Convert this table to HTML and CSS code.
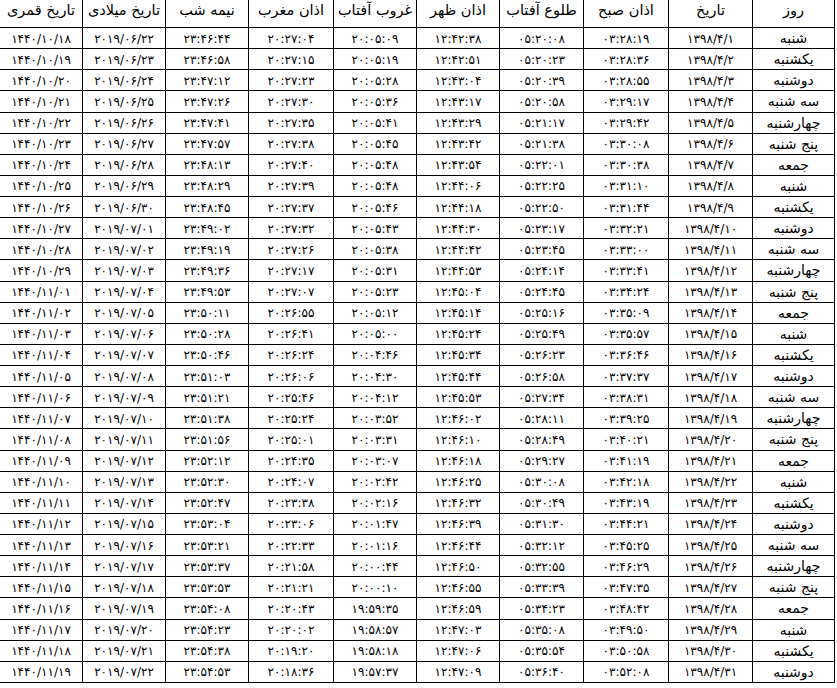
FILE: index.html
```html
<!DOCTYPE html>
<html lang="fa" dir="rtl">
<head>
<meta charset="utf-8">
<title>اوقات شرعی</title>
<link rel="stylesheet" href="styles.css">
</head>
<body>
<table class="times">
<colgroup>
<col class="c1"><col class="c2"><col class="c3"><col class="c4"><col class="c5"><col class="c6"><col class="c7"><col class="c8"><col class="c9"><col class="c10">
</colgroup>
<thead>
<tr class="head"><th>روز</th><th>تاریخ</th><th>اذان صبح</th><th>طلوع آفتاب</th><th>اذان ظهر</th><th>غروب آفتاب</th><th>اذان مغرب</th><th>نیمه شب</th><th>تاریخ میلادی</th><th>تاریخ قمری</th></tr>
</thead>
<tbody>
<tr><td>شنبه</td><td>۱۳۹۸/۴/۱</td><td>۰۳:۲۸:۱۹</td><td>۰۵:۲۰:۰۸</td><td>۱۲:۴۲:۳۸</td><td>۲۰:۰۵:۰۹</td><td>۲۰:۲۷:۰۴</td><td>۲۳:۴۶:۴۴</td><td>۲۰۱۹/۰۶/۲۲</td><td>۱۴۴۰/۱۰/۱۸</td></tr>
<tr><td>یکشنبه</td><td>۱۳۹۸/۴/۲</td><td>۰۳:۲۸:۳۶</td><td>۰۵:۲۰:۲۳</td><td>۱۲:۴۲:۵۱</td><td>۲۰:۰۵:۱۹</td><td>۲۰:۲۷:۱۵</td><td>۲۳:۴۶:۵۸</td><td>۲۰۱۹/۰۶/۲۳</td><td>۱۴۴۰/۱۰/۱۹</td></tr>
<tr><td>دوشنبه</td><td>۱۳۹۸/۴/۳</td><td>۰۳:۲۸:۵۵</td><td>۰۵:۲۰:۳۹</td><td>۱۲:۴۳:۰۴</td><td>۲۰:۰۵:۲۸</td><td>۲۰:۲۷:۲۳</td><td>۲۳:۴۷:۱۲</td><td>۲۰۱۹/۰۶/۲۴</td><td>۱۴۴۰/۱۰/۲۰</td></tr>
<tr><td>سه شنبه</td><td>۱۳۹۸/۴/۴</td><td>۰۳:۲۹:۱۷</td><td>۰۵:۲۰:۵۸</td><td>۱۲:۴۳:۱۷</td><td>۲۰:۰۵:۳۶</td><td>۲۰:۲۷:۳۰</td><td>۲۳:۴۷:۲۶</td><td>۲۰۱۹/۰۶/۲۵</td><td>۱۴۴۰/۱۰/۲۱</td></tr>
<tr><td>چهارشنبه</td><td>۱۳۹۸/۴/۵</td><td>۰۳:۲۹:۴۲</td><td>۰۵:۲۱:۱۷</td><td>۱۲:۴۳:۲۹</td><td>۲۰:۰۵:۴۱</td><td>۲۰:۲۷:۳۵</td><td>۲۳:۴۷:۴۱</td><td>۲۰۱۹/۰۶/۲۶</td><td>۱۴۴۰/۱۰/۲۲</td></tr>
<tr><td>پنج شنبه</td><td>۱۳۹۸/۴/۶</td><td>۰۳:۳۰:۰۸</td><td>۰۵:۲۱:۳۸</td><td>۱۲:۴۳:۴۲</td><td>۲۰:۰۵:۴۵</td><td>۲۰:۲۷:۳۸</td><td>۲۳:۴۷:۵۷</td><td>۲۰۱۹/۰۶/۲۷</td><td>۱۴۴۰/۱۰/۲۳</td></tr>
<tr><td>جمعه</td><td>۱۳۹۸/۴/۷</td><td>۰۳:۳۰:۳۸</td><td>۰۵:۲۲:۰۱</td><td>۱۲:۴۳:۵۴</td><td>۲۰:۰۵:۴۸</td><td>۲۰:۲۷:۴۰</td><td>۲۳:۴۸:۱۳</td><td>۲۰۱۹/۰۶/۲۸</td><td>۱۴۴۰/۱۰/۲۴</td></tr>
<tr><td>شنبه</td><td>۱۳۹۸/۴/۸</td><td>۰۳:۳۱:۱۰</td><td>۰۵:۲۲:۲۵</td><td>۱۲:۴۴:۰۶</td><td>۲۰:۰۵:۴۸</td><td>۲۰:۲۷:۳۹</td><td>۲۳:۴۸:۲۹</td><td>۲۰۱۹/۰۶/۲۹</td><td>۱۴۴۰/۱۰/۲۵</td></tr>
<tr><td>یکشنبه</td><td>۱۳۹۸/۴/۹</td><td>۰۳:۳۱:۴۴</td><td>۰۵:۲۲:۵۰</td><td>۱۲:۴۴:۱۸</td><td>۲۰:۰۵:۴۶</td><td>۲۰:۲۷:۳۷</td><td>۲۳:۴۸:۴۵</td><td>۲۰۱۹/۰۶/۳۰</td><td>۱۴۴۰/۱۰/۲۶</td></tr>
<tr><td>دوشنبه</td><td>۱۳۹۸/۴/۱۰</td><td>۰۳:۳۲:۲۱</td><td>۰۵:۲۳:۱۷</td><td>۱۲:۴۴:۳۰</td><td>۲۰:۰۵:۴۳</td><td>۲۰:۲۷:۳۲</td><td>۲۳:۴۹:۰۲</td><td>۲۰۱۹/۰۷/۰۱</td><td>۱۴۴۰/۱۰/۲۷</td></tr>
<tr><td>سه شنبه</td><td>۱۳۹۸/۴/۱۱</td><td>۰۳:۳۳:۰۰</td><td>۰۵:۲۳:۴۵</td><td>۱۲:۴۴:۴۲</td><td>۲۰:۰۵:۳۸</td><td>۲۰:۲۷:۲۶</td><td>۲۳:۴۹:۱۹</td><td>۲۰۱۹/۰۷/۰۲</td><td>۱۴۴۰/۱۰/۲۸</td></tr>
<tr><td>چهارشنبه</td><td>۱۳۹۸/۴/۱۲</td><td>۰۳:۳۳:۴۱</td><td>۰۵:۲۴:۱۴</td><td>۱۲:۴۴:۵۳</td><td>۲۰:۰۵:۳۱</td><td>۲۰:۲۷:۱۷</td><td>۲۳:۴۹:۳۶</td><td>۲۰۱۹/۰۷/۰۳</td><td>۱۴۴۰/۱۰/۲۹</td></tr>
<tr><td>پنج شنبه</td><td>۱۳۹۸/۴/۱۳</td><td>۰۳:۳۴:۲۴</td><td>۰۵:۲۴:۴۵</td><td>۱۲:۴۵:۰۴</td><td>۲۰:۰۵:۲۳</td><td>۲۰:۲۷:۰۷</td><td>۲۳:۴۹:۵۳</td><td>۲۰۱۹/۰۷/۰۴</td><td>۱۴۴۰/۱۱/۰۱</td></tr>
<tr><td>جمعه</td><td>۱۳۹۸/۴/۱۴</td><td>۰۳:۳۵:۰۹</td><td>۰۵:۲۵:۱۶</td><td>۱۲:۴۵:۱۴</td><td>۲۰:۰۵:۱۲</td><td>۲۰:۲۶:۵۵</td><td>۲۳:۵۰:۱۱</td><td>۲۰۱۹/۰۷/۰۵</td><td>۱۴۴۰/۱۱/۰۲</td></tr>
<tr><td>شنبه</td><td>۱۳۹۸/۴/۱۵</td><td>۰۳:۳۵:۵۷</td><td>۰۵:۲۵:۴۹</td><td>۱۲:۴۵:۲۴</td><td>۲۰:۰۵:۰۰</td><td>۲۰:۲۶:۴۱</td><td>۲۳:۵۰:۲۸</td><td>۲۰۱۹/۰۷/۰۶</td><td>۱۴۴۰/۱۱/۰۳</td></tr>
<tr><td>یکشنبه</td><td>۱۳۹۸/۴/۱۶</td><td>۰۳:۳۶:۴۶</td><td>۰۵:۲۶:۲۳</td><td>۱۲:۴۵:۳۴</td><td>۲۰:۰۴:۴۶</td><td>۲۰:۲۶:۲۴</td><td>۲۳:۵۰:۴۶</td><td>۲۰۱۹/۰۷/۰۷</td><td>۱۴۴۰/۱۱/۰۴</td></tr>
<tr><td>دوشنبه</td><td>۱۳۹۸/۴/۱۷</td><td>۰۳:۳۷:۳۷</td><td>۰۵:۲۶:۵۸</td><td>۱۲:۴۵:۴۴</td><td>۲۰:۰۴:۳۰</td><td>۲۰:۲۶:۰۶</td><td>۲۳:۵۱:۰۳</td><td>۲۰۱۹/۰۷/۰۸</td><td>۱۴۴۰/۱۱/۰۵</td></tr>
<tr><td>سه شنبه</td><td>۱۳۹۸/۴/۱۸</td><td>۰۳:۳۸:۳۱</td><td>۰۵:۲۷:۳۴</td><td>۱۲:۴۵:۵۳</td><td>۲۰:۰۴:۱۲</td><td>۲۰:۲۵:۴۶</td><td>۲۳:۵۱:۲۱</td><td>۲۰۱۹/۰۷/۰۹</td><td>۱۴۴۰/۱۱/۰۶</td></tr>
<tr><td>چهارشنبه</td><td>۱۳۹۸/۴/۱۹</td><td>۰۳:۳۹:۲۵</td><td>۰۵:۲۸:۱۱</td><td>۱۲:۴۶:۰۲</td><td>۲۰:۰۳:۵۲</td><td>۲۰:۲۵:۲۴</td><td>۲۳:۵۱:۳۸</td><td>۲۰۱۹/۰۷/۱۰</td><td>۱۴۴۰/۱۱/۰۷</td></tr>
<tr><td>پنج شنبه</td><td>۱۳۹۸/۴/۲۰</td><td>۰۳:۴۰:۲۱</td><td>۰۵:۲۸:۴۹</td><td>۱۲:۴۶:۱۰</td><td>۲۰:۰۳:۳۱</td><td>۲۰:۲۵:۰۱</td><td>۲۳:۵۱:۵۶</td><td>۲۰۱۹/۰۷/۱۱</td><td>۱۴۴۰/۱۱/۰۸</td></tr>
<tr><td>جمعه</td><td>۱۳۹۸/۴/۲۱</td><td>۰۳:۴۱:۱۹</td><td>۰۵:۲۹:۲۷</td><td>۱۲:۴۶:۱۸</td><td>۲۰:۰۳:۰۷</td><td>۲۰:۲۴:۳۵</td><td>۲۳:۵۲:۱۲</td><td>۲۰۱۹/۰۷/۱۲</td><td>۱۴۴۰/۱۱/۰۹</td></tr>
<tr><td>شنبه</td><td>۱۳۹۸/۴/۲۲</td><td>۰۳:۴۲:۱۸</td><td>۰۵:۳۰:۰۸</td><td>۱۲:۴۶:۲۵</td><td>۲۰:۰۲:۴۲</td><td>۲۰:۲۴:۰۷</td><td>۲۳:۵۲:۳۰</td><td>۲۰۱۹/۰۷/۱۳</td><td>۱۴۴۰/۱۱/۱۰</td></tr>
<tr><td>یکشنبه</td><td>۱۳۹۸/۴/۲۳</td><td>۰۳:۴۳:۱۹</td><td>۰۵:۳۰:۴۹</td><td>۱۲:۴۶:۳۲</td><td>۲۰:۰۲:۱۶</td><td>۲۰:۲۳:۳۸</td><td>۲۳:۵۲:۴۷</td><td>۲۰۱۹/۰۷/۱۴</td><td>۱۴۴۰/۱۱/۱۱</td></tr>
<tr><td>دوشنبه</td><td>۱۳۹۸/۴/۲۴</td><td>۰۳:۴۴:۲۱</td><td>۰۵:۳۱:۳۰</td><td>۱۲:۴۶:۳۹</td><td>۲۰:۰۱:۴۷</td><td>۲۰:۲۳:۰۶</td><td>۲۳:۵۳:۰۴</td><td>۲۰۱۹/۰۷/۱۵</td><td>۱۴۴۰/۱۱/۱۲</td></tr>
<tr><td>سه شنبه</td><td>۱۳۹۸/۴/۲۵</td><td>۰۳:۴۵:۲۵</td><td>۰۵:۳۲:۱۲</td><td>۱۲:۴۶:۴۴</td><td>۲۰:۰۱:۱۶</td><td>۲۰:۲۲:۳۳</td><td>۲۳:۵۳:۲۱</td><td>۲۰۱۹/۰۷/۱۶</td><td>۱۴۴۰/۱۱/۱۳</td></tr>
<tr><td>چهارشنبه</td><td>۱۳۹۸/۴/۲۶</td><td>۰۳:۴۶:۲۹</td><td>۰۵:۳۲:۵۵</td><td>۱۲:۴۶:۵۰</td><td>۲۰:۰۰:۴۴</td><td>۲۰:۲۱:۵۸</td><td>۲۳:۵۳:۳۷</td><td>۲۰۱۹/۰۷/۱۷</td><td>۱۴۴۰/۱۱/۱۴</td></tr>
<tr><td>پنج شنبه</td><td>۱۳۹۸/۴/۲۷</td><td>۰۳:۴۷:۳۵</td><td>۰۵:۳۳:۳۹</td><td>۱۲:۴۶:۵۵</td><td>۲۰:۰۰:۱۰</td><td>۲۰:۲۱:۲۱</td><td>۲۳:۵۳:۵۳</td><td>۲۰۱۹/۰۷/۱۸</td><td>۱۴۴۰/۱۱/۱۵</td></tr>
<tr><td>جمعه</td><td>۱۳۹۸/۴/۲۸</td><td>۰۳:۴۸:۴۲</td><td>۰۵:۳۴:۲۳</td><td>۱۲:۴۶:۵۹</td><td>۱۹:۵۹:۳۵</td><td>۲۰:۲۰:۴۳</td><td>۲۳:۵۴:۰۸</td><td>۲۰۱۹/۰۷/۱۹</td><td>۱۴۴۰/۱۱/۱۶</td></tr>
<tr><td>شنبه</td><td>۱۳۹۸/۴/۲۹</td><td>۰۳:۴۹:۵۰</td><td>۰۵:۳۵:۰۸</td><td>۱۲:۴۷:۰۳</td><td>۱۹:۵۸:۵۷</td><td>۲۰:۲۰:۰۲</td><td>۲۳:۵۴:۲۳</td><td>۲۰۱۹/۰۷/۲۰</td><td>۱۴۴۰/۱۱/۱۷</td></tr>
<tr><td>یکشنبه</td><td>۱۳۹۸/۴/۳۰</td><td>۰۳:۵۰:۵۸</td><td>۰۵:۳۵:۵۴</td><td>۱۲:۴۷:۰۶</td><td>۱۹:۵۸:۱۸</td><td>۲۰:۱۹:۲۰</td><td>۲۳:۵۴:۳۸</td><td>۲۰۱۹/۰۷/۲۱</td><td>۱۴۴۰/۱۱/۱۸</td></tr>
<tr><td>دوشنبه</td><td>۱۳۹۸/۴/۳۱</td><td>۰۳:۵۲:۰۸</td><td>۰۵:۳۶:۴۰</td><td>۱۲:۴۷:۰۹</td><td>۱۹:۵۷:۳۷</td><td>۲۰:۱۸:۳۶</td><td>۲۳:۵۴:۵۳</td><td>۲۰۱۹/۰۷/۲۲</td><td>۱۴۴۰/۱۱/۱۹</td></tr>
</tbody>
</table>
</body>
</html>
```
FILE: styles.css
```css
html, body {
  margin: 0;
  padding: 0;
  background: #ffffff;
}
body {
  direction: rtl;
  font-family: "DejaVu Sans", sans-serif;
  color: #000000;
  overflow: hidden;
}
.times {
  border-collapse: collapse;
  table-layout: fixed;
  width: 836px;
  margin-top: -1px;
  margin-right: 2px;
}
.times th,
.times td {
  border: 1px solid #000000;
  padding: 0;
  text-align: center;
  white-space: nowrap;
  overflow: hidden;
}
.times th {
  font-weight: normal;
  font-size: 14.5px;
  height: 28px;
  vertical-align: top;
  padding-top: 2px;
  box-sizing: border-box;
}
.times td {
  font-size: 12px;
  letter-spacing: 0.4px;
  height: 21.13px;
  padding-top: 1px;
  box-sizing: border-box;
}
.times td:first-child {
  font-size: 14px;
  letter-spacing: 0;
  padding-top: 0;
}
.c1 { width: 82px; }
.c2 { width: 84px; }
.c3 { width: 85px; }
.c4 { width: 84px; }
.c5 { width: 83px; }
.c6 { width: 83px; }
.c7 { width: 85px; }
.c8 { width: 83px; }
.c9 { width: 83px; }
.c10 { width: 83px; }
```
